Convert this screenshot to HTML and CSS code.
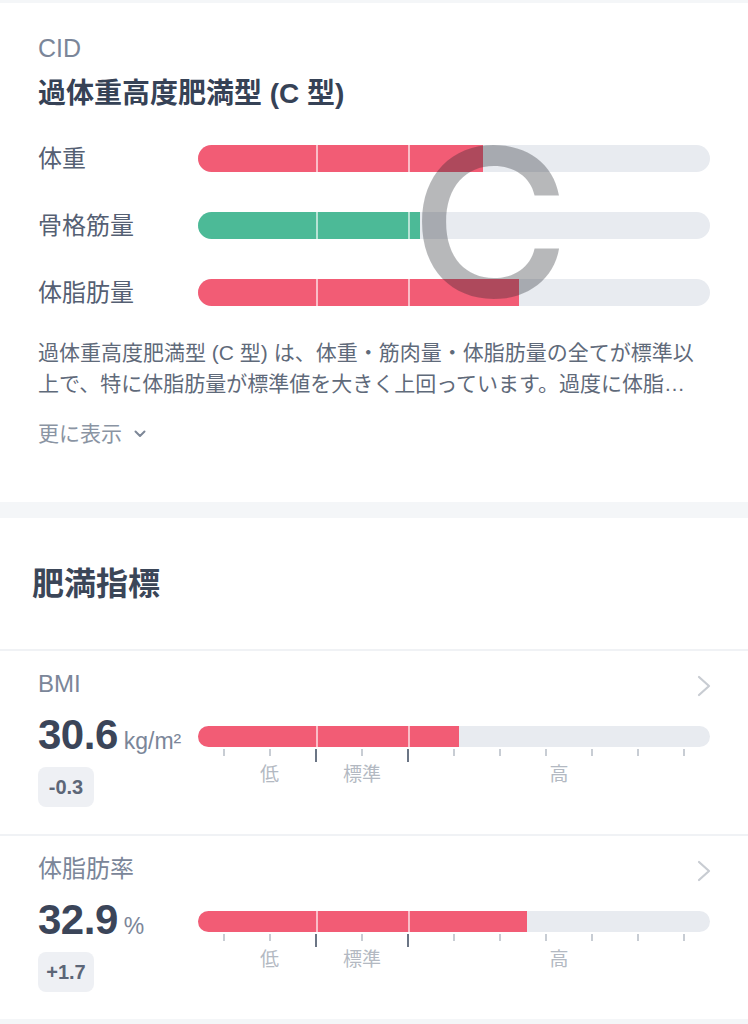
FILE: index.html
```html
<!DOCTYPE html>
<html>
<head>
  <meta name="viewport" content="width=device-width, initial-scale=1.0">
  <link rel="stylesheet" href="styles.css">
</head>
<body>
  <div class="band band-top"></div>

  <section class="card">
    <div class="cid">CID</div>
    <h2 class="type-title">過体重高度肥満型 (C 型)</h2>

    <div class="rows">
      <div class="row">
        <span class="row-label">体重</span>
        <div class="bar">
          <div class="fill red" style="width: 55.7%"></div>
          <i class="mark m1"></i><i class="mark m2"></i>
        </div>
      </div>
      <div class="row">
        <span class="row-label">骨格筋量</span>
        <div class="bar">
          <div class="fill green" style="width: 43.4%"></div>
          <i class="mark m1"></i><i class="mark m2"></i>
        </div>
      </div>
      <div class="row">
        <span class="row-label">体脂肪量</span>
        <div class="bar">
          <div class="fill red" style="width: 62.7%"></div>
          <i class="mark m1"></i><i class="mark m2"></i>
        </div>
      </div>
      <!-- type letter sits over the bars -->
      <div class="type-mark">C</div>
    </div>

    <p class="desc">過体重高度肥満型 (C 型) は、体重・筋肉量・体脂肪量の全てが標準以上で、特に体脂肪量が標準値を大きく上回っています。過度に体脂肪が蓄積しているため、生活習慣病のリスクが高い状態です。</p>

    <div class="more">
      更に表示
      <svg class="chev-down" width="12" height="8" viewBox="0 0 12 8"><polyline points="1.5,1.5 6,6 10.5,1.5" fill="none" stroke="#7d8797" stroke-width="2" stroke-linecap="round" stroke-linejoin="round"/></svg>
    </div>
  </section>

  <div class="band band-mid"></div>

  <section class="section">
    <h2 class="section-title">肥満指標</h2>

    <div class="metric">
      <div class="metric-head">
        <span class="metric-name">BMI</span>
        <svg class="chev-right" width="14" height="22" viewBox="0 0 14 22"><polyline points="2,2 12,11 2,20" fill="none" stroke="#c8ccd2" stroke-width="2.2" stroke-linecap="round" stroke-linejoin="round"/></svg>
      </div>
      <div class="metric-body">
        <div class="metric-left">
          <div class="value"><b>30.6</b><span class="unit">kg/m²</span></div>
          <span class="badge">-0.3</span>
        </div>
        <div class="scale">
          <div class="bar thin">
            <div class="fill red" style="width: 51%"></div>
            <i class="mark m1"></i><i class="mark m2"></i>
          </div>
          <div class="ticks">
            <i></i><i></i><i class="major"></i><i></i><i class="major"></i><i></i><i></i><i></i><i></i><i></i><i></i>
          </div>
          <div class="scale-labels"><span></span><span>低</span><span>標準</span><span>高</span></div>
        </div>
      </div>
    </div>

    <div class="metric">
      <div class="metric-head">
        <span class="metric-name">体脂肪率</span>
        <svg class="chev-right" width="14" height="22" viewBox="0 0 14 22"><polyline points="2,2 12,11 2,20" fill="none" stroke="#c8ccd2" stroke-width="2.2" stroke-linecap="round" stroke-linejoin="round"/></svg>
      </div>
      <div class="metric-body">
        <div class="metric-left">
          <div class="value"><b>32.9</b><span class="unit">%</span></div>
          <span class="badge">+1.7</span>
        </div>
        <div class="scale">
          <div class="bar thin">
            <div class="fill red" style="width: 64.3%"></div>
            <i class="mark m1"></i><i class="mark m2"></i>
          </div>
          <div class="ticks">
            <i></i><i></i><i class="major"></i><i></i><i class="major"></i><i></i><i></i><i></i><i></i><i></i><i></i>
          </div>
          <div class="scale-labels"><span></span><span>低</span><span>標準</span><span>高</span></div>
        </div>
      </div>
    </div>
  </section>

  <div class="band band-bottom"></div>
</body>
</html>
```

FILE: styles.css
```css
* {
  box-sizing: border-box;
  margin: 0;
  padding: 0;
}

body {
  background-color: #fff;
  font-family: "Liberation Sans", "Noto Sans CJK JP", sans-serif;
  color: #3b4559;
}

.band {
  background-color: #f4f6f8;
}

.band-top {
  height: 3px;
}

.band-mid {
  height: 16px;
}

.band-bottom {
  height: 8px;
}

/* Type card */
.card {
  padding: 30px 38px 53px;
}

.cid {
  font-size: 25px;
  line-height: 30px;
  color: #7b8699;
}

.type-title {
  margin-top: 13px;
  font-size: 28px;
  line-height: 36px;
  font-weight: bold;
  color: #364256;
}

.rows {
  position: relative;
  margin-top: 33px;
  display: flex;
  flex-direction: column;
  gap: 40px;
}

.row {
  display: grid;
  grid-template-columns: 160px 1fr;
  align-items: center;
  height: 27px;
}

.row-label {
  font-size: 24px;
  line-height: 27px;
  color: #556073;
}

.bar {
  position: relative;
  height: 27px;
  border-radius: 14px;
  background-color: #e8ebf0;
  overflow: hidden;
}

.bar.thin {
  height: 21px;
  border-radius: 11px;
}

.fill {
  height: 100%;
}

.fill.red {
  background-color: #f25c75;
}

.fill.green {
  background-color: #4cba97;
}

.mark {
  position: absolute;
  top: 0;
  bottom: 0;
  width: 2px;
  background-color: rgba(255, 255, 255, 0.6);
}

.mark.m1 {
  left: 23%;
}

.mark.m2 {
  left: 41%;
}

.type-mark {
  position: absolute;
  top: -26px;
  left: 352px;
  width: 200px;
  font-family: Inter, "Liberation Sans", sans-serif;
  font-weight: 500;
  font-size: 206px;
  line-height: 1;
  text-align: center;
  color: rgba(30, 35, 40, 0.32);
  transform: scaleX(1.06);
  pointer-events: none;
}

.desc {
  margin-top: 31px;
  max-width: 662px;
  font-size: 21px;
  line-height: 31px;
  color: #5f6a7a;
  display: -webkit-box;
  -webkit-line-clamp: 2;
  -webkit-box-orient: vertical;
  overflow: hidden;
}

.more {
  margin-top: 20px;
  display: flex;
  align-items: center;
  font-size: 21px;
  line-height: 30px;
  color: #8a94a3;
}

.chev-down {
  margin-left: 12px;
}

/* Obesity index section */
.section-title {
  padding: 46px 32px 45px;
  font-size: 32px;
  line-height: 40px;
  font-weight: bold;
  color: #3b4658;
}

.metric {
  border-top: 2px solid #f0f2f5;
  padding: 18px 38px 27px;
}

.metric-head {
  display: flex;
  justify-content: space-between;
  align-items: center;
  height: 30px;
}

.metric-name {
  font-size: 24px;
  line-height: 30px;
  color: #7b8699;
}

.chev-right {
  margin-right: -1px;
  margin-top: 4px;
}

.metric-body {
  margin-top: 15px;
  display: grid;
  grid-template-columns: 160px 1fr;
}

.metric-left {
  display: flex;
  flex-direction: column;
  align-items: flex-start;
}

.value {
  height: 42px;
  line-height: 42px;
  white-space: nowrap;
}

.value b {
  font-size: 42px;
  font-weight: bold;
  color: #3b4559;
  letter-spacing: -0.5px;
}

.unit {
  margin-left: 6px;
  font-size: 23px;
  color: #7b8699;
}

.badge {
  margin-top: 11px;
  min-width: 56px;
  height: 40px;
  line-height: 40px;
  padding: 0 8px;
  border-radius: 8px;
  background-color: #eef0f4;
  font-size: 20px;
  font-weight: bold;
  text-align: center;
  color: #5c6677;
}

.scale .bar {
  margin-top: 12px;
}

.ticks {
  display: flex;
  justify-content: space-between;
  align-items: flex-start;
  padding: 0 25px;
  margin-top: 2px;
  height: 13px;
}

.ticks i {
  width: 1.5px;
  height: 7px;
  background-color: #c8cdd4;
}

.ticks i.major {
  height: 13px;
  background-color: #6b7585;
}

.scale-labels {
  display: grid;
  grid-template-columns: 25px 93px 92px 1fr;
  margin-top: 2px;
  text-align: center;
  font-size: 19px;
  line-height: 22px;
  color: #b3b9c2;
}
```
